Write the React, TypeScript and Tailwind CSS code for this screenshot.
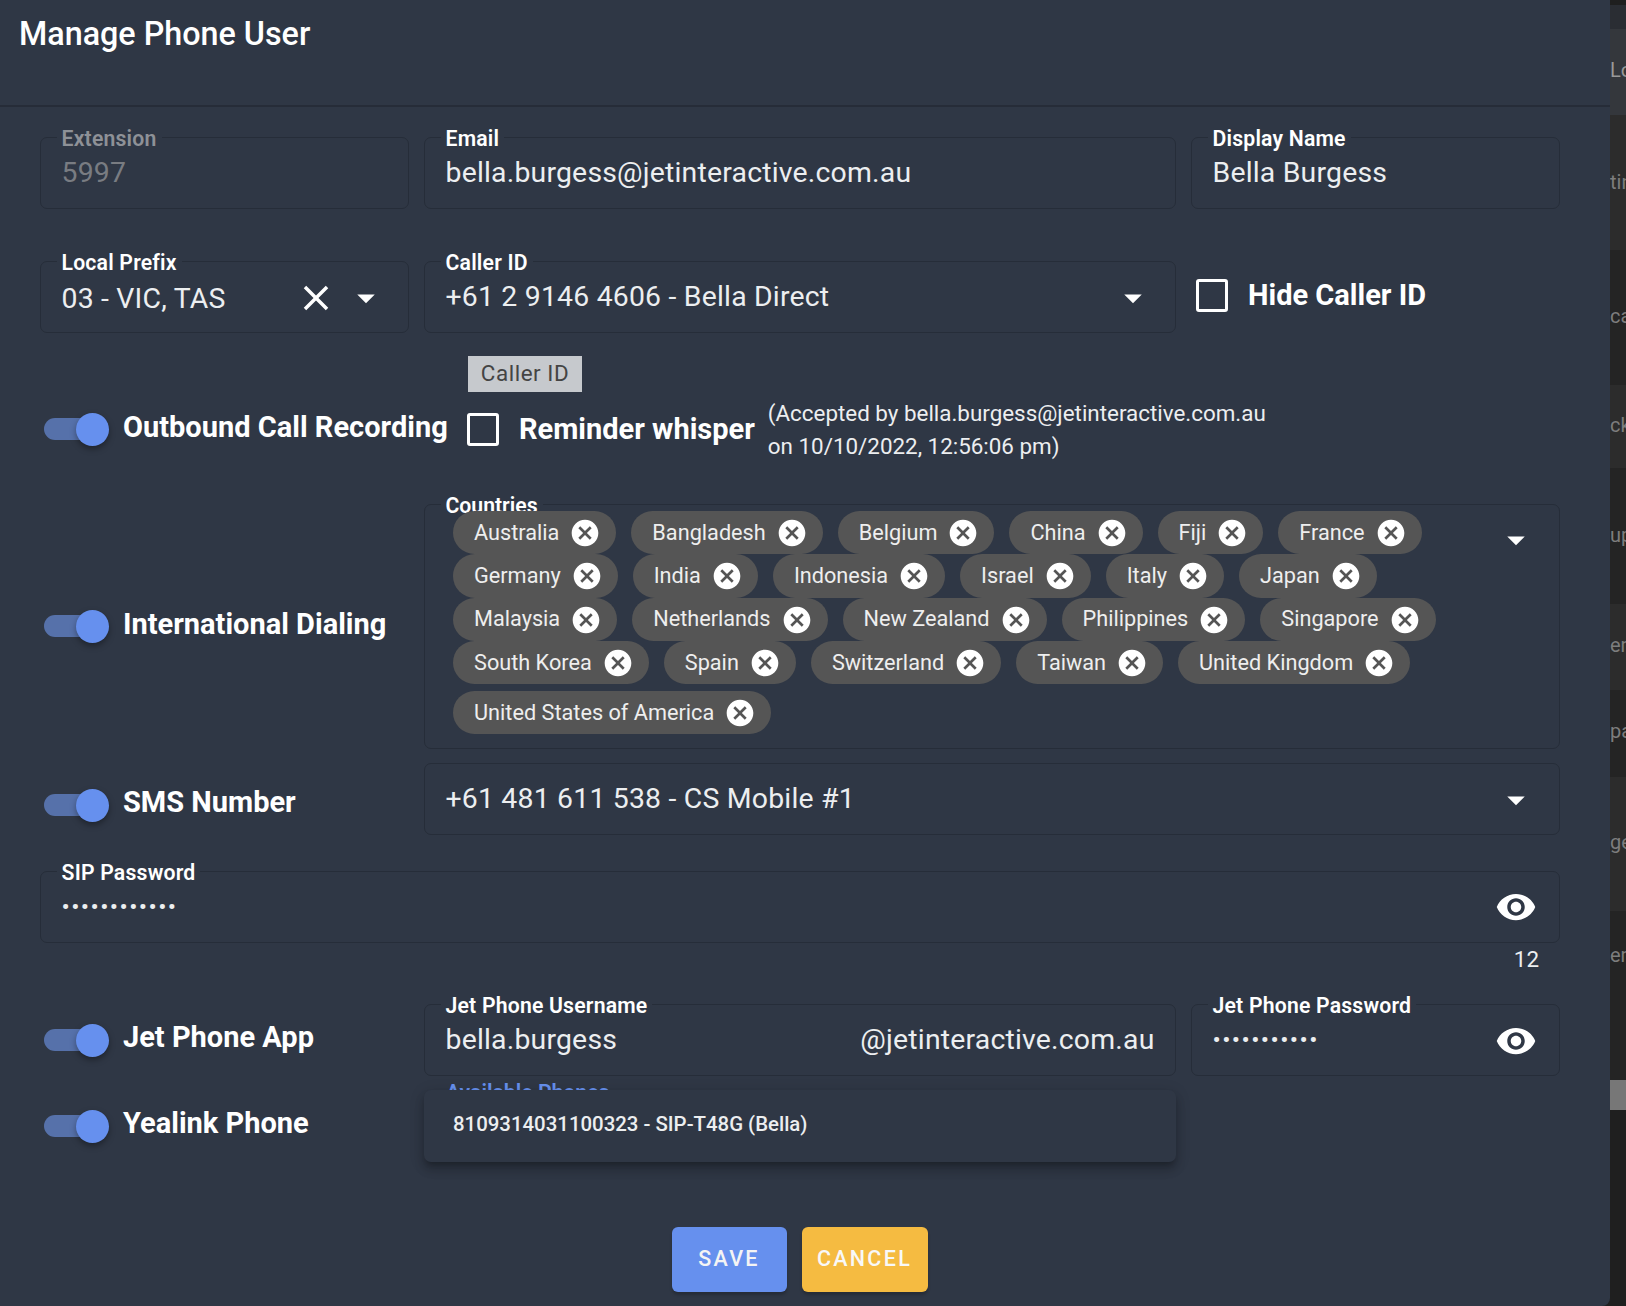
import type { ReactNode } from 'react';

const CANCEL_PATH =
  'M12 2C6.47 2 2 6.47 2 12s4.47 10 10 10 10-4.47 10-10S17.53 2 12 2zm5 13.59L15.59 17 12 13.41 8.41 17 7 15.59 10.59 12 7 8.41 8.41 7 12 10.59 15.59 7 17 8.41 13.41 12 17 15.59z';
const EYE_PATH =
  'M12 4.5C7 4.5 2.73 7.61 1 12c1.73 4.39 6 7.5 11 7.5s9.27-3.11 11-7.5c-1.73-4.39-6-7.5-11-7.5zM12 17c-2.76 0-5-2.24-5-5s2.24-5 5-5 5 2.24 5 5-2.24 5-5 5zm0-8c-1.66 0-3 1.34-3 3s1.34 3 3 3 3-1.34 3-3-1.34-3-3-3z';

const COUNTRY_ROWS = [
  ['Australia', 'Bangladesh', 'Belgium', 'China', 'Fiji', 'France'],
  ['Germany', 'India', 'Indonesia', 'Israel', 'Italy', 'Japan'],
  ['Malaysia', 'Netherlands', 'New Zealand', 'Philippines', 'Singapore'],
  ['South Korea', 'Spain', 'Switzerland', 'Taiwan', 'United Kingdom'],
];

const SIDE_ROWS = [
  { text: 'Lo', className: 'h-[86px] bg-[#34373c] pt-[29px] text-[#999]' },
  { text: 'tin', className: 'h-[135px] bg-[#2c2c2c] pt-[55px]' },
  { text: 'ca', className: 'h-[135px] bg-[#242424] pt-[54px]' },
  { text: 'ck', className: 'h-[83px] bg-[#2c2c2c] pt-[28px]' },
  { text: 'up', className: 'h-[136px] bg-[#242424] pt-[55px]' },
  { text: 'era', className: 'h-[86px] bg-[#2c2c2c] pt-[29px]' },
  { text: 'pa', className: 'h-[87px] bg-[#242424] pt-[29px]' },
  { text: 'ge', className: 'h-[134px] bg-[#2c2c2c] pt-[53px]' },
  { text: 'er(', className: 'h-[169px] bg-[#242424] pt-[32px]' },
];

function Arrow({ className }: { className: string }) {
  return (
    <svg viewBox="0 0 24 24" className={`absolute h-[42px] w-[42px] fill-white ${className}`}>
      <path d="M7 10l5 5 5-5z" />
    </svg>
  );
}

function Eye({ className }: { className: string }) {
  return (
    <svg viewBox="0 0 24 24" className={`absolute h-[42px] w-[42px] fill-white ${className}`}>
      <path d={EYE_PATH} />
    </svg>
  );
}

function Field({
  label,
  className = '',
  disabled = false,
  children,
}: {
  label?: string;
  className?: string;
  disabled?: boolean;
  children?: ReactNode;
}) {
  return (
    <div className={`relative h-[72px] rounded-[7px] border border-[#262d39] px-[20.5px] pt-[18px] text-[28.4px] leading-[34px] tracking-[0.2px] ${disabled ? 'text-[#797c82]' : 'text-[#eceef0]'} ${className}`}>
      {label && (
        <span className={`absolute -top-[11px] left-[15.5px] bg-[#2f3745] px-[5px] text-[21.2px] leading-[24px] font-semibold ${disabled ? 'text-[#8e9197]' : 'text-white'}`}>
          {label}
        </span>
      )}
      {children}
    </div>
  );
}

function Toggle({
  label,
  className = '',
  labelClassName = '-mt-[6px]',
}: {
  label: string;
  className?: string;
  labelClassName?: string;
}) {
  return (
    <div className={`flex w-[384px] shrink-0 items-center pl-[4px] ${className}`}>
      <div className="relative h-[33px] w-[65px] shrink-0">
        <div className="absolute top-[5px] left-0 h-[22px] w-[50px] rounded-l-full bg-[#5671aa]" />
        <div className="absolute top-0 right-0 h-[33px] w-[33px] rounded-full bg-[#6690ee] shadow-[0_3px_6px_rgba(0,0,0,0.35)]" />
      </div>
      <span className={`ml-[14px] text-[29px] leading-[34px] font-bold whitespace-nowrap text-white ${labelClassName}`}>{label}</span>
    </div>
  );
}

function Checkbox() {
  return <div className="h-[33px] w-[32px] shrink-0 rounded-[3px] border-[3.5px] border-white" />;
}

function Chip({ label }: { label: string }) {
  return (
    <div className="flex h-[43.25px] items-center rounded-full bg-[#555555] pt-[1px] pr-[16px] pl-[21px] text-[21.7px] whitespace-nowrap text-[#eeeeee]">
      {label}
      <svg viewBox="0 0 24 24" className="mr-[-1px] ml-[10px] h-[32px] w-[32px] fill-white">
        <path d={CANCEL_PATH} />
      </svg>
    </div>
  );
}

export default function App() {
  return (
    <div className="flex h-[1306px] w-[1626px] overflow-hidden bg-[#1f1f1f] font-['Roboto',sans-serif]">
      <main className="relative w-[1610px] shrink-0 rounded-br-[8px] bg-[#2f3745]">
        <header className="h-[107px] border-b-2 border-[#262c38] pt-[16px] pl-[19px]">
          <h1 className="text-[32.3px] leading-[36px] font-medium text-white">Manage Phone User</h1>
        </header>

        <div className="pr-[50px] pl-[40px]">
          <div className="mt-[30px] flex gap-[15px]">
            <Field label="Extension" disabled className="w-[369px]">5997</Field>
            <Field label="Email" className="w-[752px]">bella.burgess@jetinteractive.com.au</Field>
            <Field label="Display Name" className="w-[369px]">Bella Burgess</Field>
          </div>

          <div className="mt-[52px] flex gap-[15px]">
            <Field label="Local Prefix" className="w-[369px]">
              <div className="pt-[2px]">03 - VIC, TAS</div>
              <svg viewBox="0 0 24 24" className="absolute top-[15px] right-[71px] h-[42px] w-[42px] fill-white">
                <path d="M19 6.41L17.59 5 12 10.59 6.41 5 5 6.41 10.59 12 5 17.59 6.41 19 12 13.41 17.59 19 19 17.59 13.41 12z" />
              </svg>
              <Arrow className="top-[15px] right-[21px]" />
            </Field>
            <Field label="Caller ID" className="w-[752px]">
              +61 2 9146 4606 - Bella Direct
              <Arrow className="top-[15px] right-[21px]" />
            </Field>
            <div className="flex items-start pt-[18px] pl-[5px]">
              <Checkbox />
              <span className="-mt-[1px] ml-[20px] text-[29px] leading-[34px] font-bold text-white">Hide Caller ID</span>
            </div>
          </div>

          {/* Caller ID tooltip, hovering over the row below */}
          <div className="absolute top-[356px] left-[468px] flex h-[36px] w-[114px] items-center justify-center bg-[#c6c9cd] text-[22.4px] tracking-[0.55px] text-[#444444]">
            Caller ID
          </div>

          <div className="mt-[79px] flex h-[34px] items-center">
            <Toggle label="Outbound Call Recording" className="w-[427px]" labelClassName="-mt-[4px]" />
            <Checkbox />
            <span className="ml-[20px] text-[29px] leading-[34px] font-bold whitespace-nowrap text-white">Reminder whisper</span>
            <p className="mt-[1px] ml-[13px] text-[22.4px] leading-[33px] whitespace-nowrap text-[#eceef0]">
              (Accepted by bella.burgess@jetinteractive.com.au
              <br />
              on 10/10/2022, 12:56:06 pm)
            </p>
          </div>

          <div className="mt-[58px] flex items-center">
            <Toggle label="International Dialing" />
            <div className="relative h-[245px] w-[1136px] rounded-[7px] border border-[#262d39] pt-[6px] pl-[28px]">
              <span className="absolute -top-[11px] left-[15.5px] bg-[#2f3745] px-[5px] text-[21.2px] leading-[24px] font-semibold text-white">Countries</span>
              <div className="relative">
                {COUNTRY_ROWS.map((row) => (
                  <div key={row[0]} className="flex gap-x-[15px]">
                    {row.map((c) => (
                      <Chip key={c} label={c} />
                    ))}
                  </div>
                ))}
                <div className="mt-[7px] flex">
                  <Chip label="United States of America" />
                </div>
              </div>
              <Arrow className="top-[14px] right-[22px]" />
            </div>
          </div>

          <div className="mt-[14px] flex items-center">
            <Toggle label="SMS Number" className="mt-[12px]" labelClassName="-mt-[7px]" />
            <Field className="w-[1136px]">
              +61 481 611 538 - CS Mobile #1
              <Arrow className="top-[15px] right-[22px]" />
            </Field>
          </div>

          <Field label="SIP Password" className="mt-[36px] w-[1520px]">
            <div className="text-[24.5px] leading-[34px] tracking-[1.4px]">••••••••••••</div>
            <Eye className="top-[14px] right-[22px]" />
          </Field>
          <div className="flex h-[33px] items-center justify-end pr-[21px] text-[22.4px] text-[#eceef0]">12</div>

          <div className="mt-[28px] flex items-center">
            <Toggle label="Jet Phone App" labelClassName="-mt-[7px]" />
            <Field label="Jet Phone Username" className="flex w-[752px] justify-between">
              <span>bella.burgess</span>
              <span>@jetinteractive.com.au</span>
            </Field>
            <Field label="Jet Phone Password" className="ml-[15px] w-[369px]">
              <div className="text-[24.5px] leading-[34px] tracking-[1.4px]">•••••••••••</div>
              <Eye className="top-[15px] right-[22px]" />
            </Field>
          </div>

          <div className="mt-[14px] flex items-center">
            <Toggle label="Yealink Phone" />
            <div className="relative w-[752px]">
              <span className="absolute -top-[9px] left-[22px] text-[21.2px] leading-[24px] font-semibold text-[#6690ee]">Available Phones</span>
              <div className="relative h-[72px] rounded-[7px] bg-[#2f3745] pt-[20px] pl-[29px] text-[20.4px] leading-[28px] font-medium text-[#eceef0] shadow-[0_5px_5px_-3px_rgba(0,0,0,0.2),0_8px_10px_1px_rgba(0,0,0,0.14),0_3px_14px_2px_rgba(0,0,0,0.12)]">
                8109314031100323 - SIP-T48G (Bella)
              </div>
            </div>
          </div>

          <div className="mt-[65px] flex justify-center gap-[15px] pr-[1px]">
            <button className="h-[65px] w-[115px] rounded-[6px] bg-[#6690ee] text-[21.5px] font-medium tracking-[2.3px] text-[#f4f4f4] shadow-[0_3px_3px_rgba(0,0,0,0.2)]">SAVE</button>
            <button className="h-[65px] w-[126px] rounded-[6px] bg-[#f5bb41] text-[21.5px] font-medium tracking-[2.3px] text-[#f8f8f8] shadow-[0_3px_3px_rgba(0,0,0,0.2)]">CANCEL</button>
          </div>
        </div>
      </main>

      {/* sliver of the table behind the dialog */}
      <aside className="w-[16px] shrink-0 overflow-hidden pt-[5px] text-[20px] leading-[24px] text-[#7d7d7d]">
        <div className="h-[24px] bg-[#2a2d33]" />
        {SIDE_ROWS.map((r) => (
          <div key={r.text} className={`whitespace-nowrap ${r.className}`}>{r.text}</div>
        ))}
        <div className="h-[30px] bg-[#777777]" />
      </aside>
    </div>
  );
}
